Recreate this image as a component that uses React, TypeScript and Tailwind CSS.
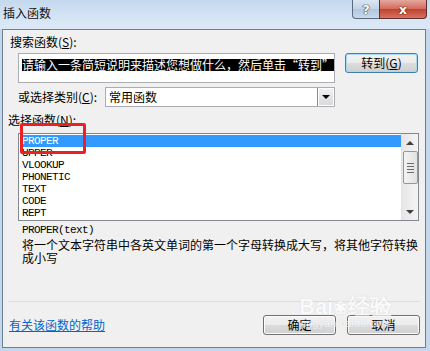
import React from 'react';

const cjk = { fontFamily: '"Noto Sans CJK SC", "Liberation Sans", sans-serif' };
const mono = { fontFamily: '"Liberation Mono", "DejaVu Sans Mono", monospace' };

const functions = ['PROPER', 'UPPER', 'VLOOKUP', 'PHONETIC', 'TEXT', 'CODE', 'REPT'];

function WinButton({ children, focused }: { children: React.ReactNode; focused?: boolean }) {
  return (
    <button
      className={`h-[20px] w-[73px] rounded-[3px] border text-[12px] leading-none text-black flex items-center justify-center bg-[linear-gradient(#f2f2f2_0%,#ebebeb_50%,#dddddd_50%,#cfcfcf_100%)] ${
        focused ? 'border-[#3c7fb1] shadow-[inset_0_0_0_1px_#a9d8f5]' : 'border-[#707070] shadow-[inset_0_0_0_1px_#fcfcfc]'
      }`}
    >
      {children}
    </button>
  );
}

export default function App() {
  return (
    <div className="w-[430px] h-[351px] overflow-hidden bg-[#c3d8ee] flex flex-col" style={cjk}>
      {/* title bar */}
      <div className="h-[29px] shrink-0 flex items-start justify-between bg-[linear-gradient(#c4d8ee,#d6e5f5_60%,#dbe8f6)]">
        <span className="pl-[3px] pt-[6px] text-[12px] leading-[14px] text-[#111]">插入函数</span>
        <div className="flex mr-[3px]">
          <div className="w-[27px] h-[19px] rounded-bl-[4px] border border-t-0 border-r-0 border-[#5a6b80] bg-[linear-gradient(#dbe6f2,#c3d3e6_50%,#b3c6dd_50%,#c9d8ea)] flex items-center justify-center">
            <span className="text-[13px] font-bold leading-none text-white [text-shadow:0_0_1px_#2a3a50,0_0_1px_#2a3a50,0_0_1px_#2a3a50]" style={{ fontFamily: '"DejaVu Sans", sans-serif' }}>?</span>
          </div>
          <div className="w-[48px] h-[19px] rounded-br-[4px] border border-t-0 border-[#5a3030] bg-[linear-gradient(#e4a89e,#d26a5a_50%,#c0412f_50%,#d7725f)] flex items-center justify-center">
            <span className="text-[13px] font-bold leading-none text-white [text-shadow:0_0_1px_#4a1a10,0_0_1px_#4a1a10,0_0_1px_#4a1a10]" style={{ fontFamily: '"DejaVu Sans", sans-serif' }}>x</span>
          </div>
        </div>
      </div>

      {/* dialog body */}
      <div className="relative ml-[2px] w-[424px] h-[319px] shrink-0 bg-[#f0f0f0] border border-[#6f7f92] flex flex-col text-[12px] text-black">
        <div className="mt-[5px] h-[14px] pl-[7px] leading-[14px]">
          搜索函数(<span className="underline">S</span>):
        </div>

        <div className="mt-[4px] pl-[15px] flex items-start gap-[10px]">
          <div className="w-[317px] h-[30px] bg-white border border-[#abadb3] pl-[3px] pt-[2px]">
            <span className="bg-black text-white leading-[12px] inline-block h-[12px] whitespace-nowrap">
              请输入一条简短说明来描述您想做什么，然后单击“转到”
            </span>
          </div>
          <WinButton focused>
            转到(<span className="underline">G</span>)
          </WinButton>
        </div>

        <div className="mt-[4px] pl-[15px] flex items-center h-[20px]">
          <span className="w-[87px] leading-[14px]">
            或选择类别(<span className="underline">C</span>):
          </span>
          <div className="w-[230px] h-[20px] bg-white border border-[#abadb3] flex items-center">
            <span className="flex-1 pl-[3px] leading-[14px]">常用函数</span>
            <div className="w-[17px] h-[18px] border-l border-[#8a8a8a] bg-[linear-gradient(#f2f2f2,#d8d8d8)] flex items-center justify-center shadow-[inset_0_0_0_1px_#ffffff]">
              <div className="w-0 h-0 border-l-[4px] border-r-[4px] border-t-[4px] border-l-transparent border-r-transparent border-t-black" />
            </div>
          </div>
        </div>

        <div className="mt-[6px] h-[14px] pl-[5px] leading-[14px]">
          选择函数(<span className="underline">N</span>):
        </div>

        <div className="mt-[6px] ml-[15px] w-[401px] h-[88px] bg-white border border-[#828790] flex">
          <div className="flex-1 pt-[1px] pl-[1px]">
            {functions.map((f, i) => (
              <div
                key={f}
                className={`h-[12px] pl-[2px] text-[11px] leading-[12px] tracking-[-0.6px] ${i === 0 ? 'bg-[#3399ff] text-white' : 'text-black'}`}
                style={mono}
              >
                {f}
              </div>
            ))}
          </div>
          <div className="w-[17px] h-full bg-[linear-gradient(90deg,#e6e6e6,#f4f4f4)] border-l border-[#e3e3e3] flex flex-col items-center">
            <div className="h-[17px] flex items-center justify-center">
              <div className="w-0 h-0 border-l-[4px] border-r-[4px] border-b-[4px] border-l-transparent border-r-transparent border-b-[#404040]" />
            </div>
            <div className="w-[15px] h-[33px] rounded-[2px] border border-[#979797] bg-[linear-gradient(90deg,#f3f3f3,#e2e2e2)] flex flex-col items-center justify-center gap-[2px]">
              <div className="w-[7px] h-[1px] bg-[#6b6b6b]" />
              <div className="w-[7px] h-[1px] bg-[#6b6b6b]" />
              <div className="w-[7px] h-[1px] bg-[#6b6b6b]" />
              <div className="w-[7px] h-[1px] bg-[#6b6b6b]" />
            </div>
            <div className="flex-1" />
            <div className="h-[17px] flex items-center justify-center">
              <div className="w-0 h-0 border-l-[4px] border-r-[4px] border-t-[4px] border-l-transparent border-r-transparent border-t-[#404040]" />
            </div>
          </div>
        </div>

        <div className="mt-[3px] pl-[19px] h-[13px] text-[11px] leading-[13px] tracking-[-0.6px]" style={mono}>
          PROPER(text)
        </div>
        <div className="mt-[1px] pl-[19px] w-[416px] leading-[13px]">
          将一个文本字符串中各英文单词的第一个字母转换成大写，将其他字符转换成小写
        </div>

        <div className="mt-[37px] ml-[5px] w-[412px] h-[1px] bg-[#d5dfe5]" />

        <div className="mt-[13px] pl-[6px] pr-[5px] flex items-center">
          <span className="text-[#0066cc] underline leading-[14px]">有关该函数的帮助</span>
          <div className="flex-1" />
          <div className="flex gap-[11px]">
            <WinButton>确定</WinButton>
            <WinButton>取消</WinButton>
          </div>
        </div>

        {/* red highlight */}
        <div className="absolute left-[17px] top-[93px] w-[66px] h-[31px] border-[3px] border-[#ea2027] rounded-[2px]" />

        {/* watermark */}
        <div className="absolute left-[296px] top-[266px] flex flex-col items-center pointer-events-none opacity-70">
          <span className="text-[22px] font-bold leading-none text-white [text-shadow:0_0_1px_#b8b8b8]" style={{ fontFamily: '"Liberation Sans", sans-serif' }}>
            Bai<span className="text-[18px]">❀</span>经验
          </span>
          <span className="text-[11px] leading-none text-white [text-shadow:0_0_1px_#b8b8b8]" style={{ fontFamily: '"Liberation Sans", sans-serif' }}>
            jingyan.baidu.com
          </span>
        </div>
      </div>
    </div>
  );
}
